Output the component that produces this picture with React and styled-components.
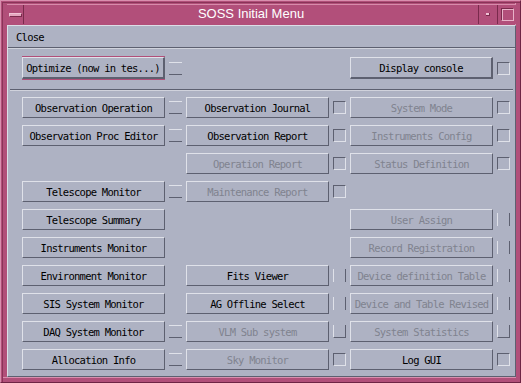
import React from 'react'
import styled, { createGlobalStyle, css } from 'styled-components'

const GlobalStyle = createGlobalStyle`
  html, body {
    margin: 0;
    padding: 0;
    background: #b14f79;
  }
  body {
    width: 521px;
    height: 383px;
    overflow: hidden;
  }
`;

const LIGHT = '#dfe1e9';
const DARK = '#5d6070';

const Frame = styled.div`
  box-sizing: border-box;
  width: 521px;
  height: 383px;
  background: #b14f79;
  border-top: 1px solid #d98fae;
  border-left: 1px solid #d98fae;
  border-right: 1px solid #6e2444;
  border-bottom: 1px solid #6e2444;
  box-shadow: inset 1px 1px 0 #b14f79, inset 2px 2px 0 #8a3458, inset -4px -4px 0 #b14f79, inset -5px -5px 0 #d98fae;
  padding: 3px 4px 5px 6px;
  display: flex;
  flex-direction: column;
`;

const TitleBar = styled.div`
  height: 20px;
  display: flex;
  background: #b24f7a;
  border-top: 1px solid #d88cab;
  box-sizing: border-box;
  margin-bottom: 1px;
`;

const TitleButton = styled.div`
  box-sizing: border-box;
  width: ${({ $w }) => $w}px;
  display: flex;
  align-items: center;
  justify-content: center;
  border-left: ${({ $left }) => ($left ? '1px solid #7a2a4c' : 'none')};
  border-right: ${({ $right }) => ($right ? '1px solid #7a2a4c' : 'none')};
`;

const Dash = styled.div`
  width: 11px;
  height: 2px;
  background: #e4a6bf;
  border: 1px solid #7a2a4c;
  border-left-color: #f0c3d5;
  border-top-color: #f0c3d5;
`;

const Dot = styled.div`
  width: 3px;
  height: 2px;
  background: #f0c3d5;
  border-bottom: 1px solid #7a2a4c;
  border-right: 1px solid #7a2a4c;
`;

const MaxBox = styled.div`
  box-sizing: border-box;
  width: 13px;
  height: 13px;
  border: 1px solid #7a2a4c;
  border-right-color: #e8b2c8;
  border-bottom-color: #e8b2c8;
  box-shadow: inset 1px 1px 0 #e8b2c8;
`;

const Title = styled.div`
  flex: 1;
  text-align: center;
  color: #ffffff;
  font-family: "Liberation Sans", Arial, sans-serif;
  font-size: 13px;
  line-height: 18px;
`;

const Client = styled.div`
  flex: 1;
  box-sizing: border-box;
  background: #aeb2c3;
  border-top: 1px solid #dcdee6;
  border-left: 1px solid #dcdee6;
  border-right: 1px solid ${DARK};
  border-bottom: 1px solid ${DARK};
  display: flex;
  flex-direction: column;
  font-family: "DejaVu Sans Mono", "Liberation Mono", monospace;
  font-size: 10.5px;
  letter-spacing: -0.75px;
`;

const MenuBar = styled.div`
  height: 21px;
  padding-left: 8px;
  display: flex;
  align-items: center;
  border-bottom: 1px solid ${DARK};
  box-shadow: 0 1px 0 #d0d2dc;
  color: #000;
`;

const TopArea = styled.div`
  display: flex;
  justify-content: space-between;
  padding: 9px 5px 10px 14px;
`;

const Separator = styled.div`
  margin: 0 2px;
  height: 1px;
  background: ${DARK};
  box-shadow: 0 1px 0 #d0d2dc;
`;

const Grid = styled.div`
  display: grid;
  grid-template-columns: repeat(3, 160px);
  grid-auto-rows: 21px;
  column-gap: 4px;
  row-gap: 7px;
  padding: 7px 0 0 14px;
`;

const Cell = styled.div`
  display: flex;
  align-items: center;
  gap: 4px;
`;

const Button = styled.div`
  box-sizing: border-box;
  width: 143px;
  height: ${({ $big }) => ($big ? 22 : 21)}px;
  display: flex;
  align-items: center;
  justify-content: center;
  white-space: nowrap;
  overflow: hidden;
  color: ${({ $disabled }) => ($disabled ? '#80838f' : '#000')};
  border-top: 1px solid ${LIGHT};
  border-left: 1px solid ${LIGHT};
  border-right: ${({ $big }) => ($big ? 2 : 1)}px solid ${DARK};
  border-bottom: ${({ $big }) => ($big ? 2 : 1)}px solid ${DARK};
  ${({ $focus }) => $focus && css`
    box-shadow: 0 -1px 0 #b14f79, 0 1px 0 #b14f79;
  `}
`;

const indicatorBorders = {
  flat: css`
    border-top: 1px solid ${LIGHT};
    border-bottom: 1px solid ${DARK};
  `,
  box: css`
    border-top: 1px solid ${DARK};
    border-left: 1px solid ${DARK};
    border-bottom: 1px solid ${LIGHT};
    border-right: 1px solid ${LIGHT};
  `,
  bars: css`
    border-left: 1px solid ${LIGHT};
    border-right: 1px solid ${DARK};
  `,
  corner: css`
    border-left: 1px solid ${LIGHT};
    border-bottom: 1px solid ${DARK};
    border-right: 1px solid ${DARK};
  `,
};

const Indicator = styled.div`
  box-sizing: border-box;
  width: 13px;
  height: 13px;
  flex: none;
  ${({ $kind }) => indicatorBorders[$kind]}
`;

const rows = [
  [['Observation Operation', 0, 'flat'], ['Observation Journal', 0, 'box'], ['System Mode', 1, 'box']],
  [['Observation Proc Editor', 0, 'flat'], ['Observation Report', 0, 'box'], ['Instruments Config', 1, 'box']],
  [null, ['Operation Report', 1, 'box'], ['Status Definition', 1, 'box']],
  [['Telescope Monitor', 0, 'flat'], ['Maintenance Report', 1, 'box'], null],
  [['Telescope Summary', 0, null], null, ['User Assign', 1, 'bars']],
  [['Instruments Monitor', 0, null], null, ['Record Registration', 1, 'bars']],
  [['Environment Monitor', 0, null], ['Fits Viewer', 0, 'bars'], ['Device definition Table', 1, 'bars']],
  [['SIS System Monitor', 0, null], ['AG Offline Select', 0, 'bars'], ['Device and Table Revised', 1, 'bars']],
  [['DAQ System Monitor', 0, 'flat'], ['VLM Sub system', 1, 'corner'], ['System Statistics', 1, 'corner']],
  [['Allocation Info', 0, 'flat'], ['Sky Monitor', 1, 'box'], ['Log GUI', 0, 'box']],
];

const App = () => {
  return (
    <>
      <GlobalStyle />
      <Frame>
        <TitleBar>
          <TitleButton $w={17} $right>
            <Dash />
          </TitleButton>
          <Title>SOSS Initial Menu</Title>
          <TitleButton $w={19} $left>
            <Dot />
          </TitleButton>
          <TitleButton $w={19} $left>
            <MaxBox />
          </TitleButton>
        </TitleBar>
        <Client>
          <MenuBar>Close</MenuBar>
          <TopArea>
            <Cell>
              <Button $big $focus>Optimize (now in tes...)</Button>
              <Indicator $kind="flat" />
            </Cell>
            <Cell>
              <Button $big>Display console</Button>
              <Indicator $kind="box" />
            </Cell>
          </TopArea>
          <Separator />
          <Grid>
            {rows.map((row, r) =>
              row.map((item, c) =>
                item ? (
                  <Cell key={`${r}-${c}`}>
                    <Button $disabled={!!item[1]}>{item[0]}</Button>
                    {item[2] && <Indicator $kind={item[2]} />}
                  </Cell>
                ) : (
                  <Cell key={`${r}-${c}`} />
                )
              )
            )}
          </Grid>
        </Client>
      </Frame>
    </>
  )
}

export default App
